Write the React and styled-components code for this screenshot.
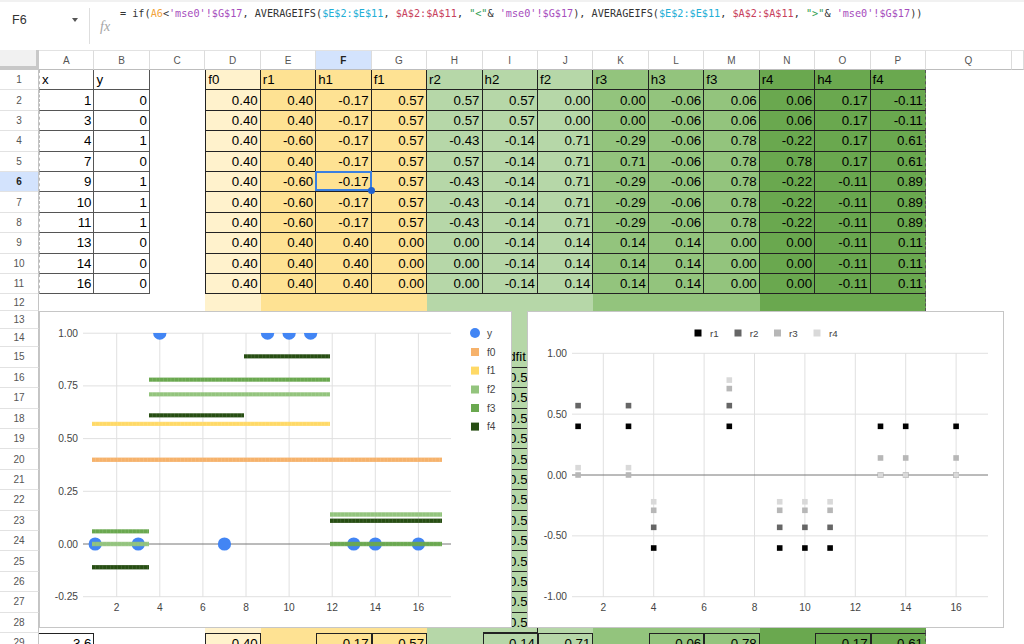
import React from "react";
import styled, { createGlobalStyle } from "styled-components";

const GlobalStyle = createGlobalStyle`
  html, body {
    margin: 0;
    width: 1024px;
    height: 644px;
    overflow: hidden;
    background: #fff;
    font-family: "Liberation Sans", Arial, sans-serif;
  }
`;

const fills = { light: "#fff2cc", yellow: "#fee293", g1: "#b6d7a8", g2: "#93c47d", g3: "#6aa84f" };
const colFill = [null, null, null, "light", "yellow", "yellow", "yellow", "g1", "g1", "g1", "g2", "g2", "g2", "g3", "g3", "g3"];
const colNames = "ABCDEFGHIJKLMNOPQ".split("");

const headers = ["x", "y", "", "f0", "r1", "h1", "f1", "r2", "h2", "f2", "r3", "h3", "f3", "r4", "h4", "f4"];
const rows = [
  [1, 0, "", "0.40", "0.40", "-0.17", "0.57", "0.57", "0.57", "0.00", "0.00", "-0.06", "0.06", "0.06", "0.17", "-0.11"],
  [3, 0, "", "0.40", "0.40", "-0.17", "0.57", "0.57", "0.57", "0.00", "0.00", "-0.06", "0.06", "0.06", "0.17", "-0.11"],
  [4, 1, "", "0.40", "-0.60", "-0.17", "0.57", "-0.43", "-0.14", "0.71", "-0.29", "-0.06", "0.78", "-0.22", "0.17", "0.61"],
  [7, 0, "", "0.40", "0.40", "-0.17", "0.57", "0.57", "-0.14", "0.71", "0.71", "-0.06", "0.78", "0.78", "0.17", "0.61"],
  [9, 1, "", "0.40", "-0.60", "-0.17", "0.57", "-0.43", "-0.14", "0.71", "-0.29", "-0.06", "0.78", "-0.22", "-0.11", "0.89"],
  [10, 1, "", "0.40", "-0.60", "-0.17", "0.57", "-0.43", "-0.14", "0.71", "-0.29", "-0.06", "0.78", "-0.22", "-0.11", "0.89"],
  [11, 1, "", "0.40", "-0.60", "-0.17", "0.57", "-0.43", "-0.14", "0.71", "-0.29", "-0.06", "0.78", "-0.22", "-0.11", "0.89"],
  [13, 0, "", "0.40", "0.40", "0.40", "0.00", "0.00", "-0.14", "0.14", "0.14", "0.14", "0.00", "0.00", "-0.11", "0.11"],
  [14, 0, "", "0.40", "0.40", "0.40", "0.00", "0.00", "-0.14", "0.14", "0.14", "0.14", "0.00", "0.00", "-0.11", "0.11"],
  [16, 0, "", "0.40", "0.40", "0.40", "0.00", "0.00", "-0.14", "0.14", "0.14", "0.14", "0.00", "0.00", "-0.11", "0.11"],
];
const lastRow = ["3.6", "", "", "0.40", "", "-0.17", "0.57", "", "-0.14", "0.71", "", "-0.06", "0.78", "", "0.17", "0.61"];

const Page = styled.div`
  position: relative;
  width: 1024px;
  height: 644px;
  overflow: hidden;
`;

const FormulaBar = styled.div`
  display: flex;
  height: 48px;
  box-sizing: border-box;
  border-top: 2px solid #f1f1f1;
  margin-bottom: 2px;
`;

const NameBox = styled.div`
  width: 90px;
  box-sizing: border-box;
  padding: 5px 0 0 12px;
  display: flex;
  justify-content: space-between;
  font-size: 12.5px;
  color: #333;
  height: 36px;
  margin-top: 6px;
  border-right: 1px solid #dedede;
`;

const Caret = styled.span`
  width: 0;
  height: 0;
  margin: 5px 11px 0 0;
  border-left: 3.5px solid transparent;
  border-right: 3.5px solid transparent;
  border-top: 4px solid #555;
`;

const FxMark = styled.span`
  margin: 17px 0 0 10px;
  width: 20px;
  font: italic 14px "Liberation Serif", serif;
  color: #a5a5a5;
`;

const FormulaText = styled.div`
  font: 10.19px "DejaVu Sans Mono", "Liberation Mono", monospace;
  color: #333;
  white-space: pre;
  margin-top: 6px;
`;

const Token = styled.span`
  color: ${(p) => p.$c};
`;

const Row = styled.div`
  display: grid;
  grid-template-columns: 39px repeat(16, 55.44px) 86px 12px;
  height: ${(p) => p.$h}px;
`;

const Corner = styled.div`
  background: #f1f1f1;
  box-sizing: border-box;
  border-right: 3px solid #c8c8c8;
  border-bottom: 4px solid #c8c8c8;
`;

const ColHead = styled.div`
  box-sizing: border-box;
  display: flex;
  align-items: center;
  justify-content: center;
  font-size: 10px;
  color: ${(p) => (p.$active ? "#222" : "#555")};
  font-weight: ${(p) => (p.$active ? 700 : 400)};
  background: ${(p) => (p.$active ? "#d3e3fd" : "#fff")};
  border-right: 1px solid #dcdcdc;
  border-bottom: 1px solid #bdbdbd;
  border-top: 1px solid #e2e2e2;
`;

const RowHead = styled.div`
  box-sizing: border-box;
  display: flex;
  align-items: center;
  justify-content: center;
  font-size: 10px;
  color: ${(p) => (p.$active ? "#222" : "#555")};
  font-weight: ${(p) => (p.$active ? 700 : 400)};
  background: ${(p) => (p.$active ? "#d3e3fd" : "#fff")};
  border-right: 1px solid #c4c4c4;
  border-bottom: 1px solid #e2e2e2;
`;

const Cell = styled.div`
  position: relative;
  z-index: ${(p) => (p.$active ? 2 : "auto")};
  box-sizing: border-box;
  display: flex;
  align-items: center;
  justify-content: ${(p) => (p.$left ? "flex-start" : "flex-end")};
  padding: 0 ${(p) => (p.$left ? 0 : 2)}px 0 2px;
  font-size: 13.3px;
  color: #000;
  white-space: nowrap;
  overflow: ${(p) => (p.$active ? "visible" : "hidden")};
  background: ${(p) => (p.$fill ? fills[p.$fill] : "transparent")};
  border-right: ${(p) => (p.$edge ? "1px dashed #555" : p.$grid ? `1px solid ${p.$grid}` : "0")};
  border-bottom: ${(p) => (p.$grid ? `1px solid ${p.$grid}` : "0")};
  border-left: ${(p) => p.$leftLine || "0"};
`;

const OpenCell = styled(Cell)`
  border-bottom: 0;
  border-top: ${(p) => (p.$grid ? `1px solid ${p.$grid}` : "0")};
  align-items: flex-start;
  padding-top: 2px;
`;

const PlainFill = styled(Cell)`
  border-bottom: 0;
  border-right: ${(p) => (p.$edge ? "1px dashed #555" : "0")};
`;

const StripCell = styled(Cell)`
  padding-right: ${(p) => p.$inset}px;
`;

const Selection = styled.span`
  position: absolute;
  inset: -1px -1px 0 -1px;
  border: 2px solid #3a7fe0;
  pointer-events: none;
  &::after {
    content: "";
    position: absolute;
    right: -5px;
    bottom: -5px;
    width: 7px;
    height: 7px;
    border-radius: 50%;
    background: #1f62d0;
  }
`;

const ChartPanel = styled.div`
  position: absolute;
  z-index: 3;
  left: ${(p) => p.$x}px;
  top: 311px;
  width: ${(p) => p.$w}px;
  height: 317px;
  background: #fff;
  box-sizing: border-box;
  border: 1px solid #c6c6c6;
  svg {
    display: block;
    font-family: "Liberation Sans", Arial, sans-serif;
  }
`;

const gridC = "#e0e0e0";
const labelC = "#444";
const tick = "10.2";

// left chart scale
const lx = (v) => 116.7 + 21.55 * (v - 2);
const ly = (v) => 544 - 210.8 * v;
// right chart scale
const rx = (v) => 603.3 + 25.2 * (v - 2);
const ry = (v) => 475 - 121.7 * v;

const points = [[1, 0], [3, 0], [4, 1], [7, 0], [9, 1], [10, 1], [11, 1], [13, 0], [14, 0], [16, 0]];

const segments = [
  { c: "#f6b26b", v: 0.4, a: 92, b: 442 },
  { c: "#ffd966", v: 0.57, a: 92, b: 330 },
  { c: "#93c47d", v: 0.71, a: 149, b: 330 },
  { c: "#93c47d", v: 0.0, a: 92, b: 149 },
  { c: "#93c47d", v: 0.14, a: 330, b: 442 },
  { c: "#6aa84f", v: 0.78, a: 149, b: 330 },
  { c: "#6aa84f", v: 0.06, a: 92, b: 149 },
  { c: "#6aa84f", v: 0.0, a: 330, b: 442 },
  { c: "#274e13", v: 0.89, a: 244, b: 330 },
  { c: "#274e13", v: 0.61, a: 149, b: 244 },
  { c: "#274e13", v: -0.11, a: 92, b: 149 },
  { c: "#274e13", v: 0.11, a: 330, b: 442 },
];

const legendLeft = [
  ["f0", "#f6b26b", 352],
  ["f1", "#ffd966", 370.6],
  ["f2", "#93c47d", 389.5],
  ["f3", "#6aa84f", 408],
  ["f4", "#274e13", 426.6],
];

const FitChart = () => (
  <ChartPanel $x={39} $w={473}>
    <svg width="471" height="315" viewBox="40 312 471 315">
      <defs>
        <clipPath id="plotClip">
          <rect x="40" y="333" width="471" height="294" />
        </clipPath>
      </defs>
      {[1, 0.75, 0.5, 0.25, -0.25].map((v) => (
        <line key={v} x1="83" x2="451" y1={ly(v)} y2={ly(v)} stroke={gridC} />
      ))}
      {[2, 4, 6, 8, 10, 12, 14, 16].map((v) => (
        <line key={v} x1={lx(v)} x2={lx(v)} y1="333" y2="597" stroke={gridC} />
      ))}
      <line x1="83" x2="451" y1={ly(0)} y2={ly(0)} stroke="#777" />
      {["1.00", "0.75", "0.50", "0.25", "0.00", "-0.25"].map((t) => (
        <text key={t} x="78" y={ly(Number(t)) + 3.5} textAnchor="end" fontSize={tick} fill={labelC}>{t}</text>
      ))}
      {[2, 4, 6, 8, 10, 12, 14, 16].map((v) => (
        <text key={v} x={lx(v)} y="610.5" textAnchor="middle" fontSize={tick} fill={labelC}>{v}</text>
      ))}
      <g clipPath="url(#plotClip)">
        {points.map(([x, y]) => (
          <circle key={x} cx={lx(x)} cy={ly(y)} r="6.6" fill="#4285f4" />
        ))}
      </g>
      {segments.map((s, i) => (
        <g key={i}>
          <line x1={s.a} x2={s.b} y1={ly(s.v)} y2={ly(s.v)} stroke={s.c} strokeWidth="4.4" opacity="0.8" />
          <line x1={s.a} x2={s.b} y1={ly(s.v)} y2={ly(s.v)} stroke={s.c} strokeWidth="3.4" strokeDasharray="3.2 0.5" />
        </g>
      ))}
      <circle cx="475" cy="333" r="5" fill="#4285f4" />
      <text x="487" y="337" fontSize={tick} fill={labelC}>y</text>
      {legendLeft.map(([name, c, y]) => (
        <g key={name}>
          <rect x="471" y={y - 4} width="8" height="8" fill={c} />
          <text x="487" y={y + 3.5} fontSize={tick} fill={labelC}>{name}</text>
        </g>
      ))}
    </svg>
  </ChartPanel>
);

const residuals = [
  { x: 1, v: [0.4, 0.57, 0, 0.06] },
  { x: 3, v: [0.4, 0.57, 0, 0.06] },
  { x: 4, v: [-0.6, -0.43, -0.29, -0.22] },
  { x: 7, v: [0.4, 0.57, 0.71, 0.78] },
  { x: 9, v: [-0.6, -0.43, -0.29, -0.22] },
  { x: 10, v: [-0.6, -0.43, -0.29, -0.22] },
  { x: 11, v: [-0.6, -0.43, -0.29, -0.22] },
  { x: 13, v: [0.4, 0, 0.14, 0] },
  { x: 14, v: [0.4, 0, 0.14, 0] },
  { x: 16, v: [0.4, 0, 0.14, 0] },
];
const greys = ["#000000", "#666666", "#b7b7b7", "#d9d9d9"];
const legendRight = [["r1", 698, 710], ["r2", 738, 749.7], ["r3", 777.5, 789], ["r4", 817, 829]];

const ResidualChart = () => (
  <ChartPanel $x={527} $w={477}>
    <svg width="475" height="315" viewBox="528 312 475 315">
      {[1, 0.5, -0.5, -1].map((v) => (
        <line key={v} x1="572" x2="988" y1={ry(v)} y2={ry(v)} stroke={gridC} />
      ))}
      {[2, 4, 6, 8, 10, 12, 14, 16].map((v) => (
        <line key={v} x1={rx(v)} x2={rx(v)} y1="353" y2="597" stroke={gridC} />
      ))}
      <line x1="572" x2="988" y1={ry(0)} y2={ry(0)} stroke="#777" />
      {["1.00", "0.50", "0.00", "-0.50", "-1.00"].map((t) => (
        <text key={t} x="567" y={ry(Number(t)) + 3.5} textAnchor="end" fontSize={tick} fill={labelC}>{t}</text>
      ))}
      {[2, 4, 6, 8, 10, 12, 14, 16].map((v) => (
        <text key={v} x={rx(v)} y="610.5" textAnchor="middle" fontSize={tick} fill={labelC}>{v}</text>
      ))}
      {[0, 1, 2, 3].map((i) =>
        residuals.map((r) => (
          <rect key={`${i}-${r.x}`} x={rx(r.x) - 2.8} y={ry(r.v[i]) - 2.8} width="5.6" height="5.6" fill={greys[i]} />
        ))
      )}
      {legendRight.map(([name, sq, tx], i) => (
        <g key={name}>
          <rect x={sq - 3.5} y="329.5" width="7" height="7" fill={greys[i]} />
          <text x={tx} y="336.5" fontSize="9.8" fill={labelC}>{name}</text>
        </g>
      ))}
    </svg>
  </ChartPanel>
);

const cellGrid = (c) => (c < 2 ? "#555" : c === 2 ? null : "#222");
const firstLine = (c) => (c === 0 ? "1px dashed #bbb" : c === 3 ? "1px solid #222" : null);

const DataRow = ({ n, h, values, isHeader }) => (
  <Row $h={h}>
    <RowHead $active={n === 6}>{n}</RowHead>
    {values.map((v, c) => (
      <Cell
        key={c}
        $fill={colFill[c]}
        $grid={cellGrid(c)}
        $edge={c === 15}
        $left={isHeader}
        $leftLine={firstLine(c)}
        $active={n === 6 && c === 5}
      >
        {v}
        {n === 6 && c === 5 && <Selection />}
      </Cell>
    ))}
  </Row>
);

// rows 12-28 mostly sit behind the charts, only fills and column I show through
const stripText = (n) => (n === 15 ? "dfit" : n > 15 ? "0.57" : "");

const FillRow = ({ n, h }) => (
  <Row $h={h}>
    <RowHead>{n}</RowHead>
    {colFill.map((f, c) =>
      c === 8 && n > 12 ? (
        <StripCell key={c} $fill={f} $grid={n >= 15 ? "#222" : null} $inset={n === 15 ? 11 : 2}>
          {stripText(n)}
        </StripCell>
      ) : (
        <PlainFill key={c} $fill={f} $edge={c === 15} />
      )
    )}
  </Row>
);

const App = () => {
  const middle = [
    [12, 16.6],
    [13, 18],
    [14, 18],
    [15, 21],
    ...Array.from({ length: 13 }, (_, i) => [16 + i, 20.4]),
  ];
  return (
    <Page>
      <GlobalStyle />
      <FormulaBar>
        <NameBox>
          F6
          <Caret />
        </NameBox>
        <FxMark>fx</FxMark>
        <FormulaText>
          {"= if("}
          <Token $c="#f2a33a">A6</Token>
          {"<"}
          <Token $c="#a64dbd">{"'mse0'!$G$17"}</Token>
          {", AVERAGEIFS("}
          <Token $c="#22aed6">{"$E$2:$E$11"}</Token>
          {", "}
          <Token $c="#c8405c">{"$A$2:$A$11"}</Token>
          {", "}
          <Token $c="#2f9e50">{'"<"'}</Token>
          {"& "}
          <Token $c="#a64dbd">{"'mse0'!$G$17"}</Token>
          {"), AVERAGEIFS("}
          <Token $c="#22aed6">{"$E$2:$E$11"}</Token>
          {", "}
          <Token $c="#c8405c">{"$A$2:$A$11"}</Token>
          {", "}
          <Token $c="#2f9e50">{'">"'}</Token>
          {"& "}
          <Token $c="#a64dbd">{"'mse0'!$G$17"}</Token>
          {"))"}
        </FormulaText>
      </FormulaBar>

      <Row $h={20}>
        <Corner />
        {colNames.map((c) => (
          <ColHead key={c} $active={c === "F"}>{c}</ColHead>
        ))}
        <ColHead />
      </Row>

      <DataRow n={1} h={20.4} values={headers} isHeader />
      {rows.map((r, i) => (
        <DataRow key={i} n={i + 2} h={20.4} values={r} />
      ))}
      {middle.map(([n, h]) => (
        <FillRow key={n} n={n} h={h} />
      ))}
      <Row $h={20.4}>
        <RowHead>29</RowHead>
        {lastRow.map((v, c) => (
          <OpenCell
            key={c}
            $fill={colFill[c]}
            $grid={v !== "" ? "#222" : null}
            $leftLine={v !== "" && c > 0 ? "1px solid #222" : null}
            $edge={c === 15}
          >
            {v}
          </OpenCell>
        ))}
      </Row>

      <FitChart />
      <ResidualChart />
    </Page>
  );
};

export default App;
